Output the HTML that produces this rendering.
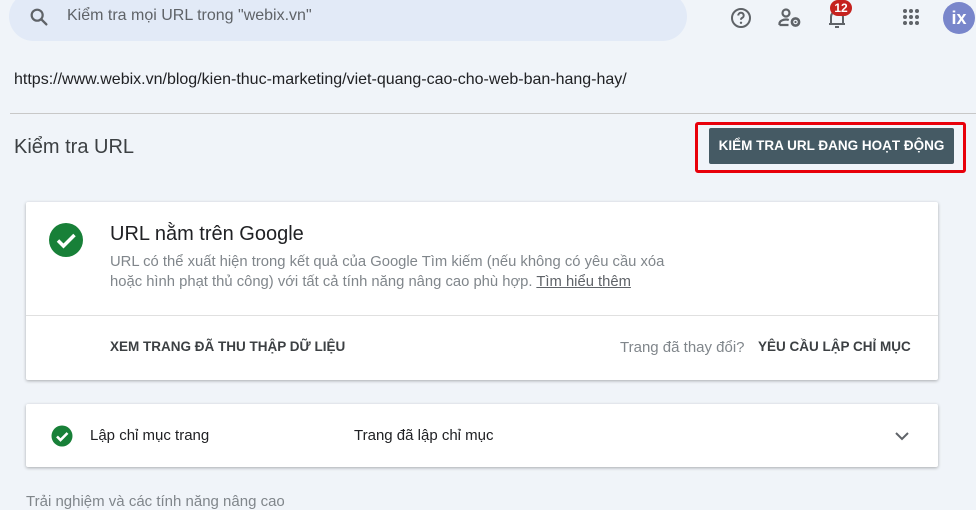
<!DOCTYPE html>
<html><head><meta charset="utf-8"><style>
*{margin:0;padding:0;box-sizing:border-box}
body{width:976px;height:506px;overflow:hidden;background:#f0f4f9;font-family:"Liberation Sans",Roboto,Arial,sans-serif;position:relative;color:#202124}
.abs{position:absolute}
.search{left:9px;top:-8px;width:678px;height:49px;background:#e2eaf7;border-radius:25px}
.ph{left:67px;top:7px;font-size:16px;color:#5f6368}
.url{left:14px;top:71px;font-size:16px;color:#202124}
.hr{left:10px;top:113px;width:966px;height:1px;background:#c8c8c8}
.title{left:14px;top:136px;font-size:20px;color:#3c4043}
.redbox{left:695px;top:122px;width:271px;height:51px;border:3px solid #e8000b;border-radius:3px}
.btn{left:709px;top:128px;width:245px;height:36px;background:#455a64;border-radius:2px;color:#fff;font-weight:bold;font-size:13.5px;line-height:36px;text-align:center;letter-spacing:0}
.card{left:26px;width:912px;background:#fff;border-radius:2px;box-shadow:0 1px 3px rgba(0,0,0,.3)}
.h{left:110px;top:223px;font-size:20px;color:#202124}
.d{left:110px;top:252px;font-size:14.8px;color:#80868b;line-height:20px}
.d u{color:#5f6368}
.div{left:26px;top:315px;width:912px;height:1px;background:#e0e0e0}
.cap{font-size:13.5px;font-weight:bold;color:#3c4043;letter-spacing:0}
.badge{left:830px;top:0;width:22px;height:16px;background:#c5221f;border-radius:8px;color:#fff;font-size:12px;text-align:center;line-height:16px;font-weight:bold}
.av{left:943px;top:2px;width:32px;height:32px;border-radius:50%;background:#7986cb;color:#fff;font-size:18px;text-align:center;line-height:32px;font-weight:bold}
</style></head><body>
<div class="abs search"></div>
<svg class="abs" style="left:28px;top:6px" width="22" height="22" viewBox="0 0 24 24"><circle cx="10" cy="10" r="6" fill="none" stroke="#5f6368" stroke-width="2.4"/><path d="M14.5 14.5L20 20" stroke="#5f6368" stroke-width="2.6" stroke-linecap="round"/></svg>
<div class="abs ph">Kiểm tra mọi URL trong "webix.vn"</div>
<svg class="abs" style="left:729px;top:6px" width="24" height="24" viewBox="0 0 24 24"><circle cx="12" cy="12" r="9" fill="none" stroke="#5f6368" stroke-width="2"/><path d="M9.3 9.5a2.7 2.7 0 1 1 3.8 2.4c-.8.4-1.1.9-1.1 1.8" fill="none" stroke="#5f6368" stroke-width="2"/><circle cx="12" cy="16.8" r="1.2" fill="#5f6368"/></svg>
<svg class="abs" style="left:777px;top:6px" width="26" height="24" viewBox="0 0 26 24"><circle cx="9" cy="7" r="3.5" fill="none" stroke="#5f6368" stroke-width="2.2"/><path d="M2.5 19v-1.5c0-2.5 3.5-4 6.5-4 1 0 2 .2 2.8.5M2.5 19h9" fill="none" stroke="#5f6368" stroke-width="2.2"/><circle cx="18.5" cy="16" r="3.6" fill="none" stroke="#5f6368" stroke-width="2.6"/><circle cx="18.5" cy="16" r="1.1" fill="#5f6368"/></svg>
<svg class="abs" style="left:825px;top:6px" width="24" height="24" viewBox="0 0 24 24"><path d="M6 18V11a6 6 0 0 1 12 0v7M4 18h16M10 21h4" fill="none" stroke="#5f6368" stroke-width="2"/></svg>
<div class="abs badge">12</div>
<svg class="abs" style="left:902px;top:8px" width="18" height="18" viewBox="0 0 18 18" fill="#5f6368"><circle cx="3" cy="3" r="2"/><circle cx="9" cy="3" r="2"/><circle cx="15" cy="3" r="2"/><circle cx="3" cy="9" r="2"/><circle cx="9" cy="9" r="2"/><circle cx="15" cy="9" r="2"/><circle cx="3" cy="15" r="2"/><circle cx="9" cy="15" r="2"/><circle cx="15" cy="15" r="2"/></svg>
<div class="abs av">ix</div>
<div class="abs url">https://www.webix.vn/blog/kien-thuc-marketing/viet-quang-cao-cho-web-ban-hang-hay/</div>
<div class="abs hr"></div>
<div class="abs title">Kiểm tra URL</div>
<div class="abs redbox"></div>
<div class="abs btn">KIỂM TRA URL ĐANG HOẠT ĐỘNG</div>

<div class="abs card" style="top:202px;height:178px"></div>
<svg class="abs" style="left:49px;top:223px" width="34" height="34" viewBox="0 0 34 34"><circle cx="17" cy="17" r="17" fill="#188038"/><path d="M9 17.5l5.5 5.5L25.5 12" fill="none" stroke="#fff" stroke-width="3.5"/></svg>
<div class="abs h">URL nằm trên Google</div>
<div class="abs d">URL có thể xuất hiện trong kết quả của Google Tìm kiếm (nếu không có yêu cầu xóa<br>hoặc hình phạt thủ công) với tất cả tính năng nâng cao phù hợp. <u>Tìm hiểu thêm</u></div>
<div class="abs div"></div>
<div class="abs cap" style="left:110px;top:339px">XEM TRANG ĐÃ THU THẬP DỮ LIỆU</div>
<div class="abs" style="left:620px;top:339px;font-size:15px;color:#80868b">Trang đã thay đổi?</div>
<div class="abs cap" style="left:758px;top:339px">YÊU CẦU LẬP CHỈ MỤC</div>

<div class="abs card" style="top:404px;height:63px"></div>
<svg class="abs" style="left:51px;top:425px" width="22" height="22" viewBox="0 0 22 22"><circle cx="11" cy="11" r="10.5" fill="#188038"/><path d="M6 11.5l3.5 3.5L16.5 8" fill="none" stroke="#fff" stroke-width="2.6"/></svg>
<div class="abs" style="left:90px;top:427px;font-size:15px;color:#202124">Lập chỉ mục trang</div>
<div class="abs" style="left:354px;top:427px;font-size:15px;color:#202124">Trang đã lập chỉ mục</div>
<svg class="abs" style="left:894px;top:430px" width="16" height="12" viewBox="0 0 16 12"><path d="M2 3l6 6 6-6" fill="none" stroke="#5f6368" stroke-width="2"/></svg>
<div class="abs" style="left:26px;top:493px;font-size:15px;color:#80868b">Trải nghiệm và các tính năng nâng cao</div>
</body></html>
